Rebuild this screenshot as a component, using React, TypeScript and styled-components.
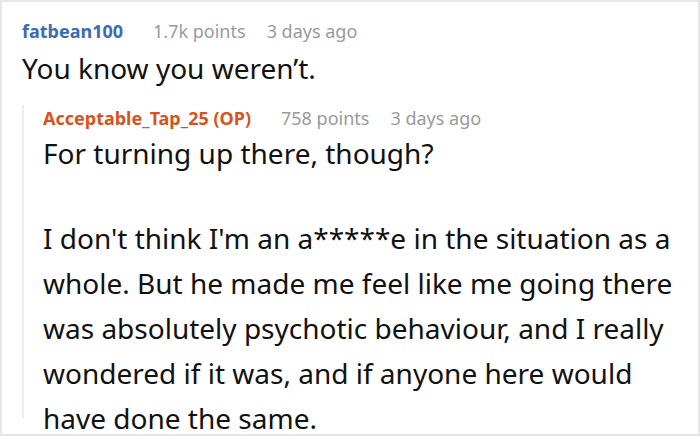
import React from 'react';
import styled, { createGlobalStyle } from 'styled-components';

const GlobalStyle = createGlobalStyle`
  html, body {
    margin: 0;
    padding: 0;
    background: #fff;
  }
  body {
    font-family: "Noto Sans", "Open Sans", sans-serif;
    color: #111;
  }
`;

const Card = styled.div`
  width: 700px;
  height: 436px;
  box-sizing: border-box;
  border: 2px solid #e6e6e6;
  padding: 14px 0 0 20px;
  overflow: hidden;
`;

const Comment = styled.div`
  display: flex;
  flex-direction: column;
`;

const Reply = styled.div`
  margin-top: 14px;
  border-left: 2px solid #ececec;
  padding-left: 19px;
  height: 313px;
  display: flex;
  flex-direction: column;
`;

const Header = styled.div<{ $h?: number }>`
  display: flex;
  align-items: baseline;
  gap: 21px;
  font-size: 18px;
  line-height: ${(p) => p.$h ?? 30}px;
`;

const User = styled.span<{ $op?: boolean }>`
  font-weight: 700;
  color: ${(p) => (p.$op ? '#d6531d' : '#3a6bb3')};
  margin-right: 9px;
`;

const Meta = styled.span`
  color: #9a9a9a;
`;

const Body = styled.p<{ $gap?: number }>`
  margin: 0 0 ${(p) => p.$gap ?? 0}px;
  font-size: 28px;
  line-height: 45px;
  white-space: nowrap;
`;

const App = () => (
  <>
    <GlobalStyle />
    <Card>
      <Comment>
        <Header>
          <User>fatbean100</User>
          <Meta>1.7k points</Meta>
          <Meta>3 days ago</Meta>
        </Header>
        <Body>You know you weren’t.</Body>
      </Comment>
      <Reply>
        <Header $h={26}>
          <User $op>Acceptable_Tap_25 (OP)</User>
          <Meta>758 points</Meta>
          <Meta>3 days ago</Meta>
        </Header>
        <Body $gap={40}>For turning up there, though?</Body>
        <Body>
          I don't think I'm an a*****e in the situation as a
          <br />
          whole. But he made me feel like me going there
          <br />
          was absolutely psychotic behaviour, and I really
          <br />
          wondered if it was, and if anyone here would
          <br />
          have done the same.
        </Body>
      </Reply>
    </Card>
  </>
);

export default App;
